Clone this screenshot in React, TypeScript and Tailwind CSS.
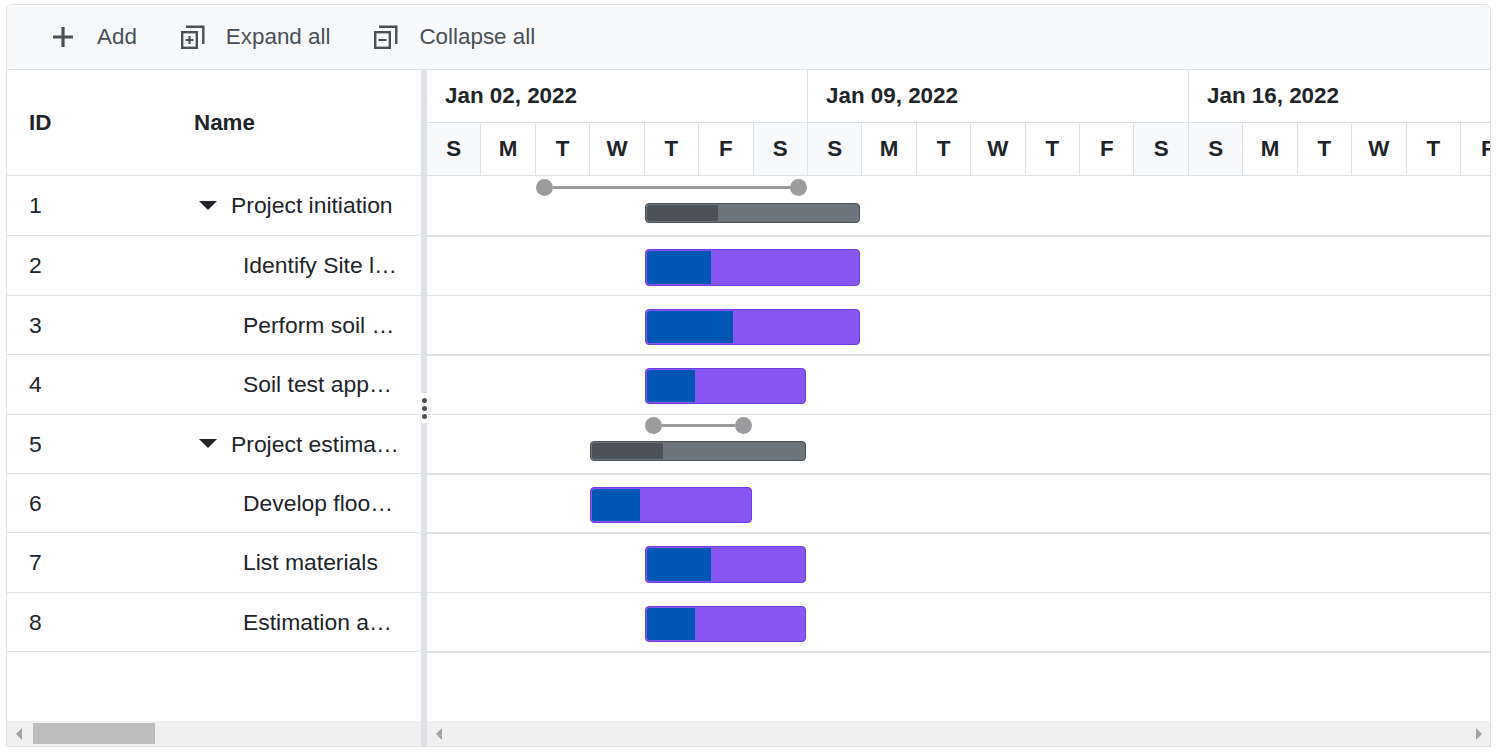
import React from 'react';

type Row = {
  id: number;
  name: string;
  parent?: boolean;
  leftH: string;
  rightClass: string;
};

const rows: Row[] = [
  { id: 1, name: 'Project initiation', parent: true, leftH: 'h-[60px]', rightClass: 'h-[61px] border-b-2' },
  { id: 2, name: 'Identify Site location', leftH: 'h-[60px]', rightClass: 'h-[59px] border-b' },
  { id: 3, name: 'Perform soil test', leftH: 'h-[59px]', rightClass: 'h-[60px] border-b-2' },
  { id: 4, name: 'Soil test approval', leftH: 'h-[60px]', rightClass: 'h-[59px] border-b' },
  { id: 5, name: 'Project estimation', parent: true, leftH: 'h-[59px]', rightClass: 'h-[60px] border-b-2' },
  { id: 6, name: 'Develop floor plan for estimation', leftH: 'h-[59px]', rightClass: 'h-[59px] border-b-2' },
  { id: 7, name: 'List materials', leftH: 'h-[60px]', rightClass: 'h-[59px] border-b' },
  { id: 8, name: 'Estimation approval', leftH: 'h-[59px]', rightClass: 'h-[60px] border-b-2' },
];

const weeks = ['Jan 02, 2022', 'Jan 09, 2022', 'Jan 16, 2022'];
const days = ['S', 'M', 'T', 'W', 'T', 'F', 'S', 'S', 'M', 'T', 'W', 'T', 'F', 'S', 'S', 'M', 'T', 'W', 'T', 'F'];

// chart items: canvas coordinates, the chart body starts at x=427 y=176
const tasks = [
  { left: 218, top: 73, width: 215, height: 37, progress: 66 },
  { left: 218, top: 133, width: 215, height: 36, progress: 88 },
  { left: 218, top: 192, width: 161, height: 36, progress: 50 },
  { left: 163, top: 311, width: 162, height: 36, progress: 50 },
  { left: 218, top: 370, width: 161, height: 37, progress: 66 },
  { left: 218, top: 430, width: 161, height: 36, progress: 50 },
];

const summaries = [
  { left: 218, top: 27, width: 215, progress: 73 },
  { left: 163, top: 265, width: 216, progress: 73 },
];

const baselines = [
  { left: 109, top: 3, width: 271 },
  { left: 218, top: 241, width: 107 },
];

const CopyIcon = ({ plus }: { plus?: boolean }) => (
  <svg width="24" height="24" viewBox="0 0 24 24" fill="none" stroke="#495057" strokeWidth="2.4">
    <path d="M5 1.7h17.3V19" />
    <rect x="1.2" y="7.2" width="14.6" height="15.6" />
    <path d={plus ? 'M4.5 15h8M8.5 11v8' : 'M4.5 15h8'} strokeWidth="2.2" />
  </svg>
);

const Caret = () => (
  <svg width="18" height="9" viewBox="0 0 18 9" className="shrink-0">
    <path d="M0 0h18L9 9z" fill="#212529" />
  </svg>
);

const Arrow = ({ right }: { right?: boolean }) => (
  <svg width="6" height="12" viewBox="0 0 6 12">
    <path d={right ? 'M0 0l6 6-6 6z' : 'M6 0L0 6l6 6z'} fill="#a3a3a3" />
  </svg>
);

export default function App() {
  return (
    <div className="w-[1501px] h-[754px] bg-white pt-[4px] pl-[6px] overflow-hidden font-['Liberation_Sans',Arial,sans-serif] text-[#212529]">
      <div className="w-[1485px] h-[743px] border border-[#dee2e6] rounded-t-[6px] flex flex-col overflow-hidden">
        <div className="h-[65px] shrink-0 bg-[#f8f9fa] border-b border-[#dee2e6] flex items-center pl-[45px] text-[22.4px] text-[#495057]">
          <svg width="22" height="22" viewBox="0 0 22 22" stroke="#495057" strokeWidth="3.2" className="mr-[23px]">
            <path d="M11 1v20M1 11h20" />
          </svg>
          <span className="mr-[44px]">Add</span>
          <CopyIcon plus />
          <span className="ml-[21px] mr-[44px]">Expand all</span>
          <CopyIcon />
          <span className="ml-[21px]">Collapse all</span>
        </div>

        <div className="flex flex-1 min-h-0">
          {/* task grid */}
          <div className="w-[414px] shrink-0 flex flex-col overflow-hidden">
            <div className="h-[106px] shrink-0 border-b border-[#dee2e6] flex items-center font-bold text-[22.4px]">
              <div className="w-[165px] pl-[22px]">ID</div>
              <div className="pl-[22px]">Name</div>
            </div>
            {rows.map((row) => (
              <div key={row.id} className={`${row.leftH} shrink-0 border-b border-[#dee2e6] flex items-center text-[22.9px]`}>
                <div className="w-[165px] shrink-0 pl-[22px]">{row.id}</div>
                {row.parent ? (
                  <div className="flex items-center flex-1 min-w-0 pl-[27px] pr-[22px]">
                    <Caret />
                    <span className="ml-[14px] truncate">{row.name}</span>
                  </div>
                ) : (
                  <div className="flex-1 min-w-0 pl-[71px] pr-[22px] truncate">{row.name}</div>
                )}
              </div>
            ))}
            <div className="flex-1" />
            <div className="h-[25px] shrink-0 bg-[#f0f0f0] flex items-center relative">
              <div className="ml-[9px]"><Arrow /></div>
              <div className="absolute left-[26px] top-[2px] w-[122px] h-[21px] bg-[#bdbdbd]" />
            </div>
          </div>

          {/* splitter */}
          <div className="w-[6px] shrink-0 bg-[#dee2e6] relative">
            <div className="absolute left-0 top-[323px] w-[6px] h-[30px] bg-white flex flex-col items-center justify-center gap-[3px]">
              <span className="w-[5px] h-[5px] rounded-full bg-[#495057]" />
              <span className="w-[5px] h-[5px] rounded-full bg-[#495057]" />
              <span className="w-[5px] h-[5px] rounded-full bg-[#495057]" />
            </div>
          </div>

          {/* timeline */}
          <div className="flex-1 min-w-0 flex flex-col overflow-hidden">
            <div className="h-[53px] shrink-0 flex border-b border-[#dee2e6] font-bold text-[22.4px]">
              {weeks.map((w) => (
                <div key={w} className="w-[381px] shrink-0 border-r border-[#dee2e6] pl-[18px] flex items-center">
                  {w}
                </div>
              ))}
            </div>
            <div className="h-[53px] shrink-0 flex border-b border-[#dee2e6] font-bold text-[22.4px] overflow-hidden">
              {days.map((d, i) => (
                <div
                  key={i}
                  className={`w-[54.43px] shrink-0 border-r border-[#dee2e6] flex items-center justify-center ${
                    d === 'S' ? 'bg-[#f8f9fa]' : ''
                  }`}
                >
                  {d}
                </div>
              ))}
            </div>
            <div className="flex-1 min-h-0 relative">
              {rows.map((row) => (
                <div key={row.id} className={`${row.rightClass} border-[#dee2e6]`} />
              ))}
              {baselines.map((b) => (
                <div key={b.left} className="absolute h-[17px] flex items-center" style={{ left: b.left, top: b.top, width: b.width }}>
                  <span className="w-[17px] h-[17px] rounded-full bg-[#9c9c9e] shrink-0" />
                  <span className="flex-1 h-[3px] bg-[#9c9c9e]" />
                  <span className="w-[17px] h-[17px] rounded-full bg-[#9c9c9e] shrink-0" />
                </div>
              ))}
              {summaries.map((s) => (
                <div
                  key={s.left}
                  className="absolute h-[20px] rounded-[4px] bg-[#6c757d] border border-[#495057] overflow-hidden p-px"
                  style={{ left: s.left, top: s.top, width: s.width }}
                >
                  <div className="h-full bg-[#4b5259] rounded-l-[3px]" style={{ width: s.progress - 2 + 'px' }} />
                </div>
              ))}
              {tasks.map((t) => (
                <div
                  key={t.top}
                  className="absolute rounded-[4px] bg-[#8756f3] border border-[#6a3de0] overflow-hidden p-px"
                  style={{ left: t.left, top: t.top, width: t.width, height: t.height }}
                >
                  <div className="h-full bg-[#0056b3] rounded-l-[3px]" style={{ width: t.progress - 2 + 'px' }} />
                </div>
              ))}
              <div className="absolute left-0 right-0 bottom-0 h-[25px] bg-[#f0f0f0] flex items-center justify-between pl-[9px] pr-[8px]">
                <Arrow />
                <Arrow right />
              </div>
            </div>
          </div>
        </div>
      </div>
    </div>
  );
}
